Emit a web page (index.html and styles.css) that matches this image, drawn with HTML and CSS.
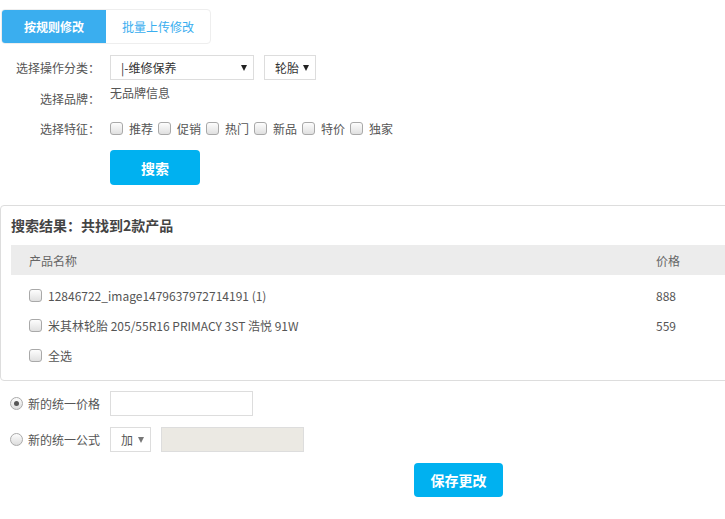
FILE: index.html
```html
<!DOCTYPE html>
<html lang="zh-CN">
<head>
<meta charset="UTF-8">
<title>批量修改价格</title>
<link rel="stylesheet" href="styles.css">
</head>
<body>
  <div class="tabs">
    <div class="tab active">按规则修改</div>
    <div class="tab">批量上传修改</div>
  </div>

  <div class="filter">
    <div class="row row-cat">
      <span class="lbl">选择操作分类：</span>
      <div class="sel sel-cat">|-维修保养<span class="arr"></span></div>
      <div class="sel sel-sub">轮胎<span class="arr"></span></div>
    </div>
    <div class="row row-brand">
      <span class="lbl">选择品牌：</span>
      <span class="val">无品牌信息</span>
    </div>
    <div class="row row-tag">
      <span class="lbl">选择特征：</span>
      <span class="chk"></span><span class="opt">推荐</span>
      <span class="chk"></span><span class="opt">促销</span>
      <span class="chk"></span><span class="opt">热门</span>
      <span class="chk"></span><span class="opt">新品</span>
      <span class="chk"></span><span class="opt">特价</span>
      <span class="chk"></span><span class="opt">独家</span>
    </div>
    <div class="row row-btn">
      <span class="lbl"></span>
      <div class="btn">搜索</div>
    </div>
  </div>

  <div class="result">
    <div class="result-title">搜索结果：共找到2款产品</div>
    <div class="thead">
      <span class="col-name">产品名称</span>
      <span class="col-price">价格</span>
    </div>
    <div class="tbody">
      <div class="trow">
        <span class="col-name"><span class="chk"></span>12846722_image1479637972714191 (1)</span>
        <span class="col-price">888</span>
      </div>
      <div class="trow">
        <span class="col-name"><span class="chk"></span>米其林轮胎 205/55R16 PRIMACY 3ST 浩悦 91W</span>
        <span class="col-price">559</span>
      </div>
      <div class="trow">
        <span class="col-name"><span class="chk"></span>全选</span>
      </div>
    </div>
  </div>

  <div class="update">
    <div class="urow">
      <span class="radio on"></span><span class="ulbl">新的统一价格</span>
      <div class="inp"></div>
    </div>
    <div class="urow">
      <span class="radio"></span><span class="ulbl">新的统一公式</span>
      <div class="sel sel-op">加<span class="arr"></span></div>
      <div class="inp disabled"></div>
    </div>
    <div class="save-row">
      <div class="btn">保存更改</div>
    </div>
  </div>
</body>
</html>
```

FILE: styles.css
```css
body {
  margin: 0;
  font-family: 'Noto Sans CJK SC', 'Noto Sans', sans-serif;
  font-size: 12px;
  color: #555;
  background: #fff;
  overflow-x: hidden;
}
.tabs {
  display: flex;
  margin: 9px 0 0 1px;
  width: 210px;
  height: 35px;
  border: 1px solid #eee;
  border-radius: 4px;
  box-sizing: border-box;
  overflow: hidden;
}
.tab {
  width: 105px;
  display: flex;
  align-items: center;
  justify-content: center;
  font-size: 12px;
  color: #3aaeef;
}
.tab.active {
  background: #3aaeef;
  color: #fff;
  font-weight: bold;
}
.filter {
  margin-top: 11px;
}
.row {
  display: flex;
  align-items: center;
}
.lbl {
  width: 100px;
  text-align: right;
  margin-right: 10px;
  color: #555;
  flex-shrink: 0;
}
.row-cat {
  height: 25px;
}
.sel {
  height: 25px;
  border: 1px solid #ddd;
  box-sizing: border-box;
  display: flex;
  align-items: center;
  color: #333;
}
.sel .arr {
  width: 0;
  height: 0;
  border-left: 3.5px solid transparent;
  border-right: 3.5px solid transparent;
  border-top: 6px solid #222;
  margin-left: auto;
}
.sel-cat {
  width: 144px;
  padding: 0 6px 0 10px;
}
.sel-sub {
  width: 52px;
  margin-left: 10px;
  padding: 0 6px 0 10px;
}
.row-brand {
  margin-top: 5px;
  height: 26px;
}
.row-brand .lbl {
  align-self: flex-end;
  line-height: 24px;
}
.row-brand .val {
  align-self: flex-start;
  line-height: 16px;
}
.row-tag {
  margin-top: 3px;
  height: 28px;
}
.chk {
  display: inline-block;
  width: 11px;
  height: 11px;
  border: 1px solid #a9a9a9;
  border-radius: 3px;
  background: linear-gradient(#fdfdfd, #e0e0e0);
  margin-right: 6px;
  flex-shrink: 0;
}
.opt {
  margin-right: 5px;
}
.row-btn {
  margin-top: 8px;
}
.btn {
  width: 90px;
  height: 35px;
  border-radius: 4px;
  background: #00b1f0;
  color: #fff;
  font-weight: bold;
  font-size: 14px;
  display: flex;
  align-items: center;
  justify-content: center;
}
.result {
  margin-top: 20px;
  width: 760px;
  height: 176px;
  border: 1px solid #ddd;
  border-radius: 4px;
  box-sizing: border-box;
  padding: 0 0 0 10px;
}
.result-title {
  height: 39px;
  line-height: 39px;
  font-weight: bold;
  font-size: 14px;
  color: #444;
}
.thead {
  height: 30px;
  background: #ececec;
  display: flex;
  align-items: center;
}
.tbody {
  padding-top: 5px;
}
.trow {
  height: 30px;
  display: flex;
  align-items: center;
}
.col-name {
  width: 627px;
  padding-left: 18px;
  display: flex;
  align-items: center;
}
.thead .col-name,
.thead .col-price {
  color: #666;
}
.update {
  margin-top: 10px;
}
.urow {
  display: flex;
  align-items: center;
  height: 25px;
  padding-left: 10px;
  margin-bottom: 11px;
}
.radio {
  width: 11px;
  height: 11px;
  border: 1px solid #aaa;
  border-radius: 50%;
  background: linear-gradient(#fdfdfd, #dcdcdc);
  margin-right: 5px;
  position: relative;
  flex-shrink: 0;
}
.radio.on::after {
  content: '';
  position: absolute;
  left: 3px;
  top: 3px;
  width: 5px;
  height: 5px;
  border-radius: 50%;
  background: #555;
}
.ulbl {
  width: 82px;
}
.inp {
  width: 143px;
  height: 25px;
  border: 1px solid #ddd;
  box-sizing: border-box;
}
.inp.disabled {
  background: #ebe9e3;
  margin-left: 10px;
}
.sel-op {
  width: 41px;
  padding: 0 6px 0 10px;
  color: #555;
}
.sel-op .arr {
  border-top-color: #777;
}
.save-row {
  padding-left: 414px;
}
.save-row .btn {
  width: 89px;
  height: 34px;
}
```
